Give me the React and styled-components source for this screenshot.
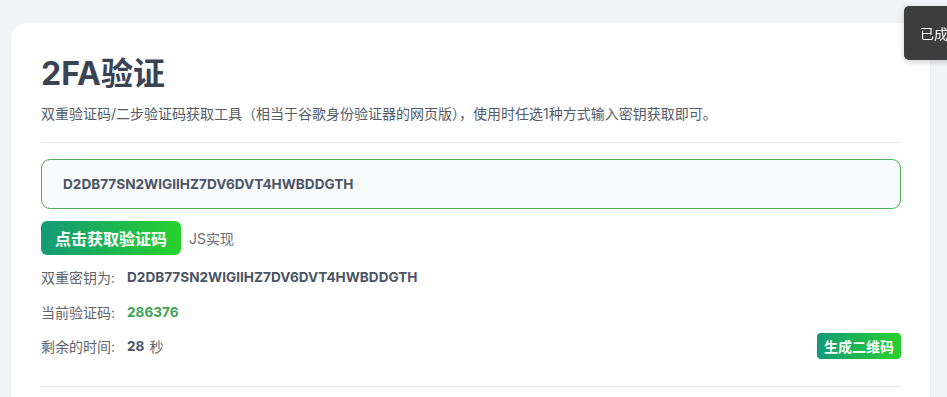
import React from 'react';
import styled, { createGlobalStyle } from 'styled-components';

const GlobalStyle = createGlobalStyle`
  html, body {
    margin: 0;
    padding: 0;
    overflow: hidden;
    background: #f3f4f8;
    font-family: Inter, "Noto Sans CJK SC", sans-serif;
  }
`;

const Page = styled.div`
  padding: 23px 17px 0 11px;
`;

const Card = styled.div`
  background: #fff;
  border-radius: 16px;
  padding: 26px 29px 0 30px;
  min-height: 400px;
  box-shadow: 0 0 6px rgba(0, 0, 0, 0.03);
`;

const Title = styled.h1`
  margin: 0;
  font-size: 32px;
  line-height: 50px;
  font-weight: 700;
  color: #3a4354;
`;

const Intro = styled.p`
  margin: 5px 0 0;
  font-size: 14px;
  line-height: 20px;
  color: #555b66;
`;

const Divider = styled.hr`
  border: 0;
  border-top: 1px solid #e6e7ea;
  margin: ${(p) => p.$top || 18}px 0 0;
`;

const SecretBox = styled.div`
  margin-top: 16px;
  height: 50px;
  box-sizing: border-box;
  border: 1px solid #4cae57;
  border-radius: 9px;
  background: #f8fafc;
  display: flex;
  align-items: center;
  padding: 0 21px;
  font-size: 13.6px;
  font-weight: 700;
  color: #4b5563;
`;

const ActionRow = styled.div`
  margin-top: 12px;
  display: flex;
  align-items: center;
  gap: 8px;
`;

const GreenButton = styled.button`
  border: 0;
  border-radius: ${(p) => (p.$small ? 4 : 6)}px;
  background: linear-gradient(90deg, #139a78 0%, #27d12d 100%);
  color: #fff;
  font-family: "Noto Sans CJK SC", sans-serif;
  font-weight: 700;
  font-size: ${(p) => (p.$small ? 14 : 16)}px;
  height: ${(p) => (p.$small ? 26 : 34)}px;
  padding: 0 ${(p) => (p.$small ? 7 : 14)}px;
  display: flex;
  align-items: center;
  cursor: pointer;
`;

const Note = styled.span`
  font-size: 14px;
  color: #6b6f76;
`;

const InfoList = styled.div`
  margin-top: 5px;
  display: flex;
  flex-direction: column;
`;

const InfoRow = styled.div`
  height: 34.5px;
  display: flex;
  align-items: center;
  font-size: 14px;
`;

const Label = styled.span`
  color: #60646c;
  width: 86px;
`;

const Value = styled.span`
  font-weight: 700;
  font-size: 13.6px;
  color: ${(p) => p.$color || '#4b5563'};
`;

const Unit = styled.span`
  margin-left: 5px;
  color: #60646c;
`;

const Spacer = styled.div`
  flex: 1;
`;

const Toast = styled.div`
  position: fixed;
  top: 6px;
  left: 904px;
  height: 54px;
  padding: 0 16px;
  display: flex;
  align-items: center;
  background: #3d3d3d;
  border-radius: 5px;
  color: #fff;
  font-size: 14px;
  white-space: nowrap;
  box-shadow: 0 2px 6px rgba(0, 0, 0, 0.2);
`;

export default function App() {
  const secret = 'D2DB77SN2WIGIIHZ7DV6DVT4HWBDDGTH';
  return (
    <Page>
      <GlobalStyle />
      <Card>
        <Title>2FA验证</Title>
        <Intro>双重验证码/二步验证码获取工具（相当于谷歌身份验证器的网页版），使用时任选1种方式输入密钥获取即可。</Intro>
        <Divider />
        <SecretBox>{secret}</SecretBox>
        <ActionRow>
          <GreenButton>点击获取验证码</GreenButton>
          <Note>JS实现</Note>
        </ActionRow>
        <InfoList>
          <InfoRow>
            <Label>双重密钥为:</Label>
            <Value>{secret}</Value>
          </InfoRow>
          <InfoRow>
            <Label>当前验证码:</Label>
            <Value $color="#3fa457">286376</Value>
          </InfoRow>
          <InfoRow>
            <Label>剩余的时间:</Label>
            <Value>28</Value>
            <Unit>秒</Unit>
            <Spacer />
            <GreenButton $small>生成二维码</GreenButton>
          </InfoRow>
        </InfoList>
        <Divider $top={22} />
      </Card>
      <Toast>已成功复制</Toast>
    </Page>
  );
}
